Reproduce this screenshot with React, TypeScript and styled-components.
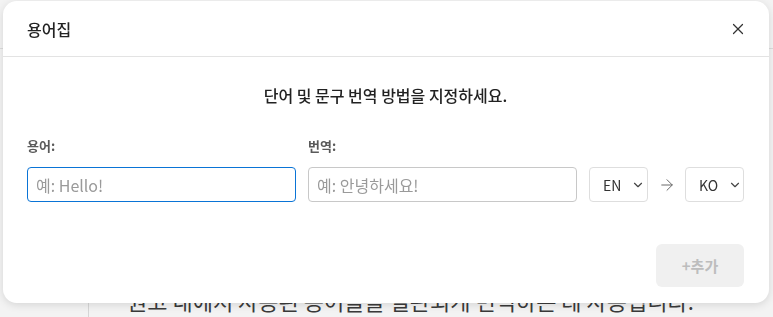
import styled, { createGlobalStyle } from "styled-components"
import { X, ChevronDown, ArrowRight } from "lucide-react"

const GlobalStyle = createGlobalStyle`
   html, body {
      margin: 0;
      padding: 0;
      width: 773px;
      height: 317px;
      overflow: hidden;
      background: #f3f3f3;
      font-family: "Noto Sans CJK KR", "Noto Sans", sans-serif;
   }
   * { box-sizing: border-box; }
`

export default function App() {
   return (
      <>
         <GlobalStyle/>
         <Page>
            <PageHeader/>
            <PageBody>
               <Sidebar/>
               <Content>
                  <p>원고 내에서 사용된 용어들을 일관되게 번역하는 데 사용됩니다.</p>
               </Content>
            </PageBody>
         </Page>
         <Modal>
            <ModalHeader>
               <ModalTitle>용어집</ModalTitle>
               <CloseButton aria-label="닫기">
                  <X size={18} strokeWidth={1.6}/>
               </CloseButton>
            </ModalHeader>
            <ModalBody>
               <Description>단어 및 문구 번역 방법을 지정하세요.</Description>
               <FormRow>
                  <Field>
                     <Label>용어:</Label>
                     <Input focused placeholder="예: Hello!"/>
                  </Field>
                  <Field>
                     <Label>번역:</Label>
                     <Input placeholder="예: 안녕하세요!"/>
                  </Field>
                  <LangGroup>
                     <LangSelect>
                        EN
                        <ChevronDown size={14} strokeWidth={2}/>
                     </LangSelect>
                     <ArrowBox>
                        <ArrowRight size={18} strokeWidth={1.3}/>
                     </ArrowBox>
                     <LangSelect>
                        KO
                        <ChevronDown size={14} strokeWidth={2}/>
                     </LangSelect>
                  </LangGroup>
               </FormRow>
               <Footer>
                  <AddButton disabled>+추가</AddButton>
               </Footer>
            </ModalBody>
         </Modal>
      </>
   )
}

const Page = styled.div`
   width: 773px;
   height: 317px;
   display: flex;
   flex-direction: column;
`

const PageHeader = styled.div`
   height: 49px;
   border-bottom: 1px solid #dcdcdc;
   flex-shrink: 0;
`

const PageBody = styled.div`
   flex: 1;
   display: flex;
`

const Sidebar = styled.div`
   width: 89px;
   border-right: 1px solid #d6d6d6;
`

const Content = styled.div`
   flex: 1;
   padding: 236px 0 0 38px;
   p {
      margin: 0;
      font-size: 22px;
      line-height: 30px;
      color: #3a3a3a;
      white-space: nowrap;
   }
`

const Modal = styled.div`
   position: fixed;
   left: 3px;
   top: 1px;
   width: 766px;
   height: 302px;
   background: #fff;
   border-radius: 14px;
   box-shadow: 0 2px 8px rgba(0, 0, 0, 0.12);
   display: flex;
   flex-direction: column;
`

const ModalHeader = styled.div`
   height: 56px;
   padding: 0 24px;
   display: flex;
   align-items: center;
   justify-content: space-between;
   border-bottom: 1px solid #e3e3e3;
`

const ModalTitle = styled.h2`
   margin: 0;
   font-size: 16px;
   font-weight: 500;
   color: #222;
`

const CloseButton = styled.button`
   border: none;
   background: none;
   padding: 0;
   margin-right: -2px;
   color: #333;
   display: flex;
   cursor: pointer;
`

const ModalBody = styled.div`
   flex: 1;
   padding: 27px 25px 16px 24px;
   display: flex;
   flex-direction: column;
`

const Description = styled.p`
   margin: 0;
   text-align: center;
   font-size: 16px;
   line-height: 22px;
   font-weight: 500;
   color: #222;
`

const FormRow = styled.div`
   margin-top: 31px;
   display: flex;
   align-items: flex-end;
   gap: 12px;
`

const Field = styled.div`
   flex: 1;
   display: flex;
   flex-direction: column;
   gap: 12px;
`

const Label = styled.label`
   font-size: 13px;
   line-height: 18px;
   font-weight: 700;
   color: #5a5a5a;
`

const Input = styled.input<{ focused?: boolean }>`
   height: 35px;
   width: 100%;
   padding: 0 8px;
   border-radius: 4px;
   border: 1px solid ${p => p.focused ? "#0a74d6" : "#c8c8c8"};
   font-family: inherit;
   font-size: 16px;
   color: #222;
   outline: none;
   &::placeholder { color: #9a9a9a; }
`

const LangGroup = styled.div`
   display: flex;
   align-items: center;
`

const LangSelect = styled.div`
   width: 59px;
   height: 35px;
   border: 1px solid #dedede;
   border-radius: 4px;
   display: flex;
   align-items: center;
   gap: 10px;
   padding-left: 13px;
   font-size: 14px;
   color: #333;
   svg { color: #444; }
`

const ArrowBox = styled.div`
   width: 37px;
   display: flex;
   justify-content: center;
   color: #666;
`

const Footer = styled.div`
   margin-top: auto;
   display: flex;
   justify-content: flex-end;
`

const AddButton = styled.button`
   width: 88px;
   height: 43px;
   border: none;
   border-radius: 6px;
   background: #f0f0f0;
   color: #bdbdbd;
   font-family: inherit;
   font-size: 15px;
   font-weight: 700;
`
